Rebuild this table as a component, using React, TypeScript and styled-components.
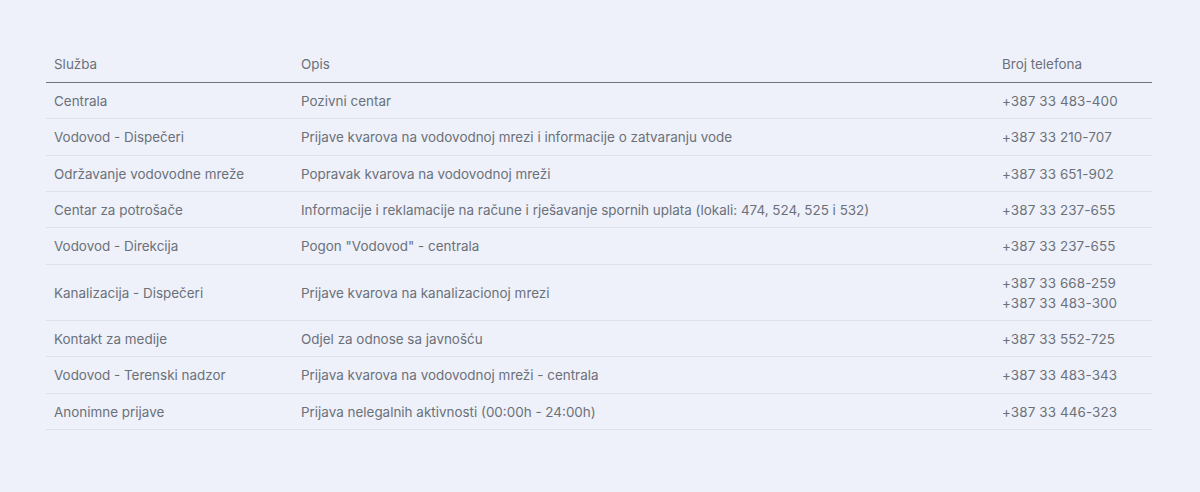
import React from 'react';
import styled, { createGlobalStyle } from 'styled-components';

const GlobalStyle = createGlobalStyle`
  html, body {
    margin: 0;
    padding: 0;
    background: #eef1fa;
  }
  body {
    font-family: Inter, "Noto Sans", sans-serif;
  }
`;

const Page = styled.div`
  box-sizing: border-box;
  width: 1200px;
  height: 492px;
  padding: 46px 48px 0 46px;
  background: #eef1fa;
`;

const Table = styled.table`
  width: 100%;
  border-collapse: collapse;
  table-layout: fixed;
  font-size: 13.45px;
  line-height: 20px;
  color: #6b7079;
`;

const HeadCell = styled.th`
  text-align: left;
  font-weight: 400;
  padding: 8px 8px;
  border-bottom: 1px solid #6f737c;
  color: #6b7079;
`;

const Row = styled.tr`
  border-bottom: 1px solid #dde1eb;
`;

const Cell = styled.td`
  padding: 8px 8px 7.33px;
  vertical-align: middle;
`;

const Phone = styled.div`
  white-space: nowrap;
  letter-spacing: 0.1px;
`;

interface Entry {
  service: string;
  description: string;
  phones: string[];
}

const entries: Entry[] = [
  { service: 'Centrala', description: 'Pozivni centar', phones: ['+387 33 483-400'] },
  {
    service: 'Vodovod - Dispečeri',
    description: 'Prijave kvarova na vodovodnoj mrezi i informacije o zatvaranju vode',
    phones: ['+387 33 210-707'],
  },
  {
    service: 'Održavanje vodovodne mreže',
    description: 'Popravak kvarova na vodovodnoj mreži',
    phones: ['+387 33 651-902'],
  },
  {
    service: 'Centar za potrošače',
    description: 'Informacije i reklamacije na račune i rješavanje spornih uplata (lokali: 474, 524, 525 i 532)',
    phones: ['+387 33 237-655'],
  },
  { service: 'Vodovod - Direkcija', description: 'Pogon "Vodovod" - centrala', phones: ['+387 33 237-655'] },
  {
    service: 'Kanalizacija - Dispečeri',
    description: 'Prijave kvarova na kanalizacionoj mrezi',
    phones: ['+387 33 668-259', '+387 33 483-300'],
  },
  { service: 'Kontakt za medije', description: 'Odjel za odnose sa javnošću', phones: ['+387 33 552-725'] },
  {
    service: 'Vodovod - Terenski nadzor',
    description: 'Prijava kvarova na vodovodnoj mreži - centrala',
    phones: ['+387 33 483-343'],
  },
  {
    service: 'Anonimne prijave',
    description: 'Prijava nelegalnih aktivnosti (00:00h - 24:00h)',
    phones: ['+387 33 446-323'],
  },
];

export default function App() {
  return (
    <Page>
      <GlobalStyle />
      <Table>
        <colgroup>
          <col style={{ width: 247 }} />
          <col style={{ width: 701 }} />
          <col />
        </colgroup>
        <thead>
          <tr>
            <HeadCell>Služba</HeadCell>
            <HeadCell>Opis</HeadCell>
            <HeadCell>Broj telefona</HeadCell>
          </tr>
        </thead>
        <tbody>
          {entries.map((e) => (
            <Row key={e.service}>
              <Cell>{e.service}</Cell>
              <Cell>{e.description}</Cell>
              <Cell>
                {e.phones.map((p) => (
                  <Phone key={p}>{p}</Phone>
                ))}
              </Cell>
            </Row>
          ))}
        </tbody>
      </Table>
    </Page>
  );
}
